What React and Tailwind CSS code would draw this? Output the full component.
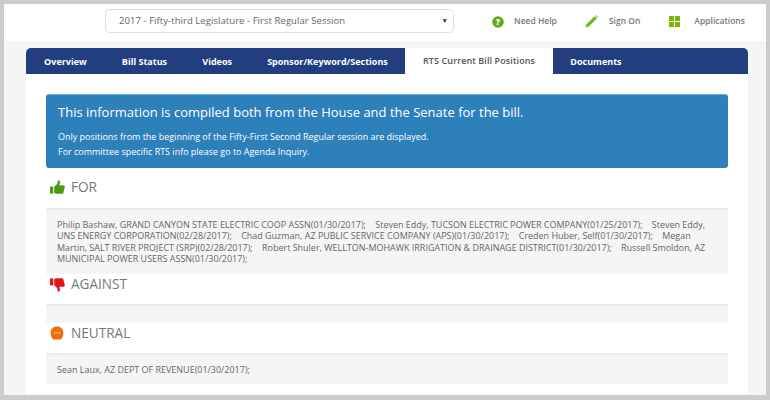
import React from "react";

function ThumbUp({ className }) {
  return (
    <svg viewBox="0 0 16 16" className={className} fill="#4c9a12">
      <rect x="0" y="7" width="3.5" height="7.5" />
      <path d="M4.5 7.2 7.5 4.2 8.6 0.4c1.5-.2 2.3.9 2 2.4L10 5.6h4.4c1.2 0 1.6 1 1.3 1.9l-1.4 6c-.2.7-.7 1.1-1.4 1.1H6.5l-2-.8z" />
    </svg>
  );
}

function ThumbDown({ className }) {
  return (
    <svg viewBox="0 0 16 16" className={className} fill="#e0161c">
      <rect x="0" y="1.5" width="3.5" height="7.5" />
      <path d="M4.5 8.8 7.5 11.8 8.6 15.6c1.5.2 2.3-.9 2-2.4L10 10.4h4.4c1.2 0 1.6-1 1.3-1.9l-1.4-6c-.2-.7-.7-1.1-1.4-1.1H6.5l-2 .8z" />
    </svg>
  );
}

function Neutral({ className }) {
  return (
    <svg viewBox="0 0 14 14" className={className}>
      <path d="M7 .4C3.2.4 .6 3 .6 6.6c0 2 .4 3.9 1.4 5.3.5.9 1.2 1.7 2.2 1.7h5.6c1 0 1.7-.8 2.2-1.7 1-1.4 1.4-3.3 1.4-5.3C13.4 3 10.8.4 7 .4z" fill="#ec6f0c" />
      <rect x="4" y="6.4" width="1.4" height="1" fill="#fff" />
      <rect x="6.3" y="6.4" width="1.4" height="1" fill="#fff" />
      <rect x="8.6" y="6.4" width="1.4" height="1" fill="#fff" />
    </svg>
  );
}

function HelpIcon() {
  return (
    <svg viewBox="0 0 12 12" className="w-3 h-3 shrink-0">
      <circle cx="6" cy="6" r="5.8" fill="#62ad16" />
      <text x="6" y="9" textAnchor="middle" fontSize="8.5" fontWeight="800" fill="#fff" fontFamily="'Open Sans', sans-serif">?</text>
    </svg>
  );
}

function Pencil() {
  return (
    <svg viewBox="0 0 13 13" className="w-[13px] h-[13px] shrink-0 block">
      <path d="M0.4 12.6 1.5 9.2 9.6 1.2 11.9 3.4 3.8 11.5z" fill="#74b816" />
      <path d="M10.2.6 11 0l2 2-.6.8z" fill="#74b816" />
    </svg>
  );
}

function Grid() {
  return (
    <div className="grid grid-cols-2 gap-px w-[11px] h-[11px] shrink-0">
      <span className="bg-[#7ab800]" />
      <span className="bg-[#7ab800]" />
      <span className="bg-[#7ab800]" />
      <span className="bg-[#7ab800]" />
    </div>
  );
}

const tabs = [
  ["Overview", false],
  ["Bill Status", false],
  ["Videos", false],
  ["Sponsor/Keyword/Sections", false],
  ["RTS Current Bill Positions", true],
  ["Documents", false],
];

function Heading({ icon, label, cls }) {
  return (
    <div className={`flex items-center text-[13.6px] leading-[20px] text-[#777] ${cls}`}>
      <span className="w-[25px] pl-[4px] flex items-center">{icon}</span>
      <span>{label}</span>
    </div>
  );
}

function Well({ children, cls }) {
  return (
    <div className={`bg-[#f5f5f5] border-t-2 border-[#ebebeb] text-[8.98px] leading-[11.6px] text-[#666] ${cls}`}>
      {children}
    </div>
  );
}

export default function App() {
  return (
    <div
      className="w-[770px] h-[400px] overflow-hidden bg-[#f5f5f5] border-[#cccccc] border-t-4 border-x-4 border-b-[5px] flex flex-col"
      style={{ fontFamily: "'Open Sans', sans-serif" }}
    >
      <header className="h-[37px] bg-white shrink-0 flex items-center pl-[101px]">
        <div className="w-[349px] h-6 mt-[-3px] bg-white border border-[#dedede] rounded-[5px] flex items-center justify-between pl-[13px] pr-[5px] text-[9.5px] text-[#666]">
          <span className="tracking-[0.06px]">2017 - Fifty-third Legislature - First Regular Session</span>
          <span className="text-[6.5px] text-[#333]">▼</span>
        </div>
        <div className="flex items-center mt-[-2px] ml-[38px] font-semibold text-[#777] text-[8.5px]">
          <HelpIcon />
          <span className="ml-[10px]">Need Help</span>
          <span className="ml-[28px]"><Pencil /></span>
          <span className="ml-[11px]">Sign On</span>
          <span className="ml-[29px]"><Grid /></span>
          <span className="ml-[14px]">Applications</span>
        </div>
      </header>
      <main className="flex-1 ml-[22px] mr-[18px] mt-[7px] flex flex-col min-h-0">
        <nav className="h-[26px] shrink-0 bg-[#223e7e] rounded-t-[5px] flex pt-px pl-[0.5px] text-[9px] font-bold text-white overflow-hidden">
          {tabs.map(([t, active]) => (
            <div
              key={t}
              className={`px-[17.6px] flex items-center ${active ? "bg-white text-[#555] font-semibold tracking-[0.1px] -mt-px" : ""}`}
            >
              {t}
            </div>
          ))}
        </nav>
        <section className="flex-1 bg-white px-5 pt-5 min-h-0 overflow-hidden">
          <div className="h-[74px] bg-[#2e80bb] border-t border-[#6aa5d0] rounded-[3px] text-white pl-[12px] pt-[7px]">
            <div className="text-[13px] leading-[20px]">This information is compiled both from the House and the Senate for the bill.</div>
            <div className="text-[8.98px] leading-[15px] mt-[7px]">
              Only positions from the beginning of the Fifty-First Second Regular session are displayed.
              <br />
              For committee specific RTS info please go to Agenda Inquiry.
            </div>
          </div>
          <Heading cls="mt-[9px]" label="FOR" icon={<ThumbUp className="w-[15px] h-[15px]" />} />
          <Well cls="mt-[11px] h-[66px] pl-[11px] pr-[20px] pt-[8.5px] whitespace-pre-wrap">
            {"Philip Bashaw, GRAND CANYON STATE ELECTRIC COOP ASSN(01/30/2017);    Steven Eddy, TUCSON ELECTRIC POWER COMPANY(01/25/2017);    Steven Eddy, UNS ENERGY CORPORATION(02/28/2017);    Chad Guzman, AZ PUBLIC SERVICE COMPANY (APS)(01/30/2017);    Creden Huber, Self(01/30/2017);    Megan Martin, SALT RIVER PROJECT (SRP)(02/28/2017);    Robert Shuler, WELLTON-MOHAWK IRRIGATION & DRAINAGE DISTRICT(01/30/2017);    Russell Smoldon, AZ MUNICIPAL POWER USERS ASSN(01/30/2017);"}
          </Well>
          <Heading label="AGAINST" icon={<ThumbDown className="w-[15px] h-[15px]" />} />
          <Well cls="mt-[10px] h-[19px]" />
          <Heading cls="pt-0 h-[30px] items-start" label="NEUTRAL" icon={<Neutral className="w-[14px] h-[14px] mt-[3px]" />} />
          <Well cls="h-[31px] pl-[11px] pt-[9px]">Sean Laux, AZ DEPT OF REVENUE(01/30/2017);</Well>
        </section>
      </main>
    </div>
  );
}
